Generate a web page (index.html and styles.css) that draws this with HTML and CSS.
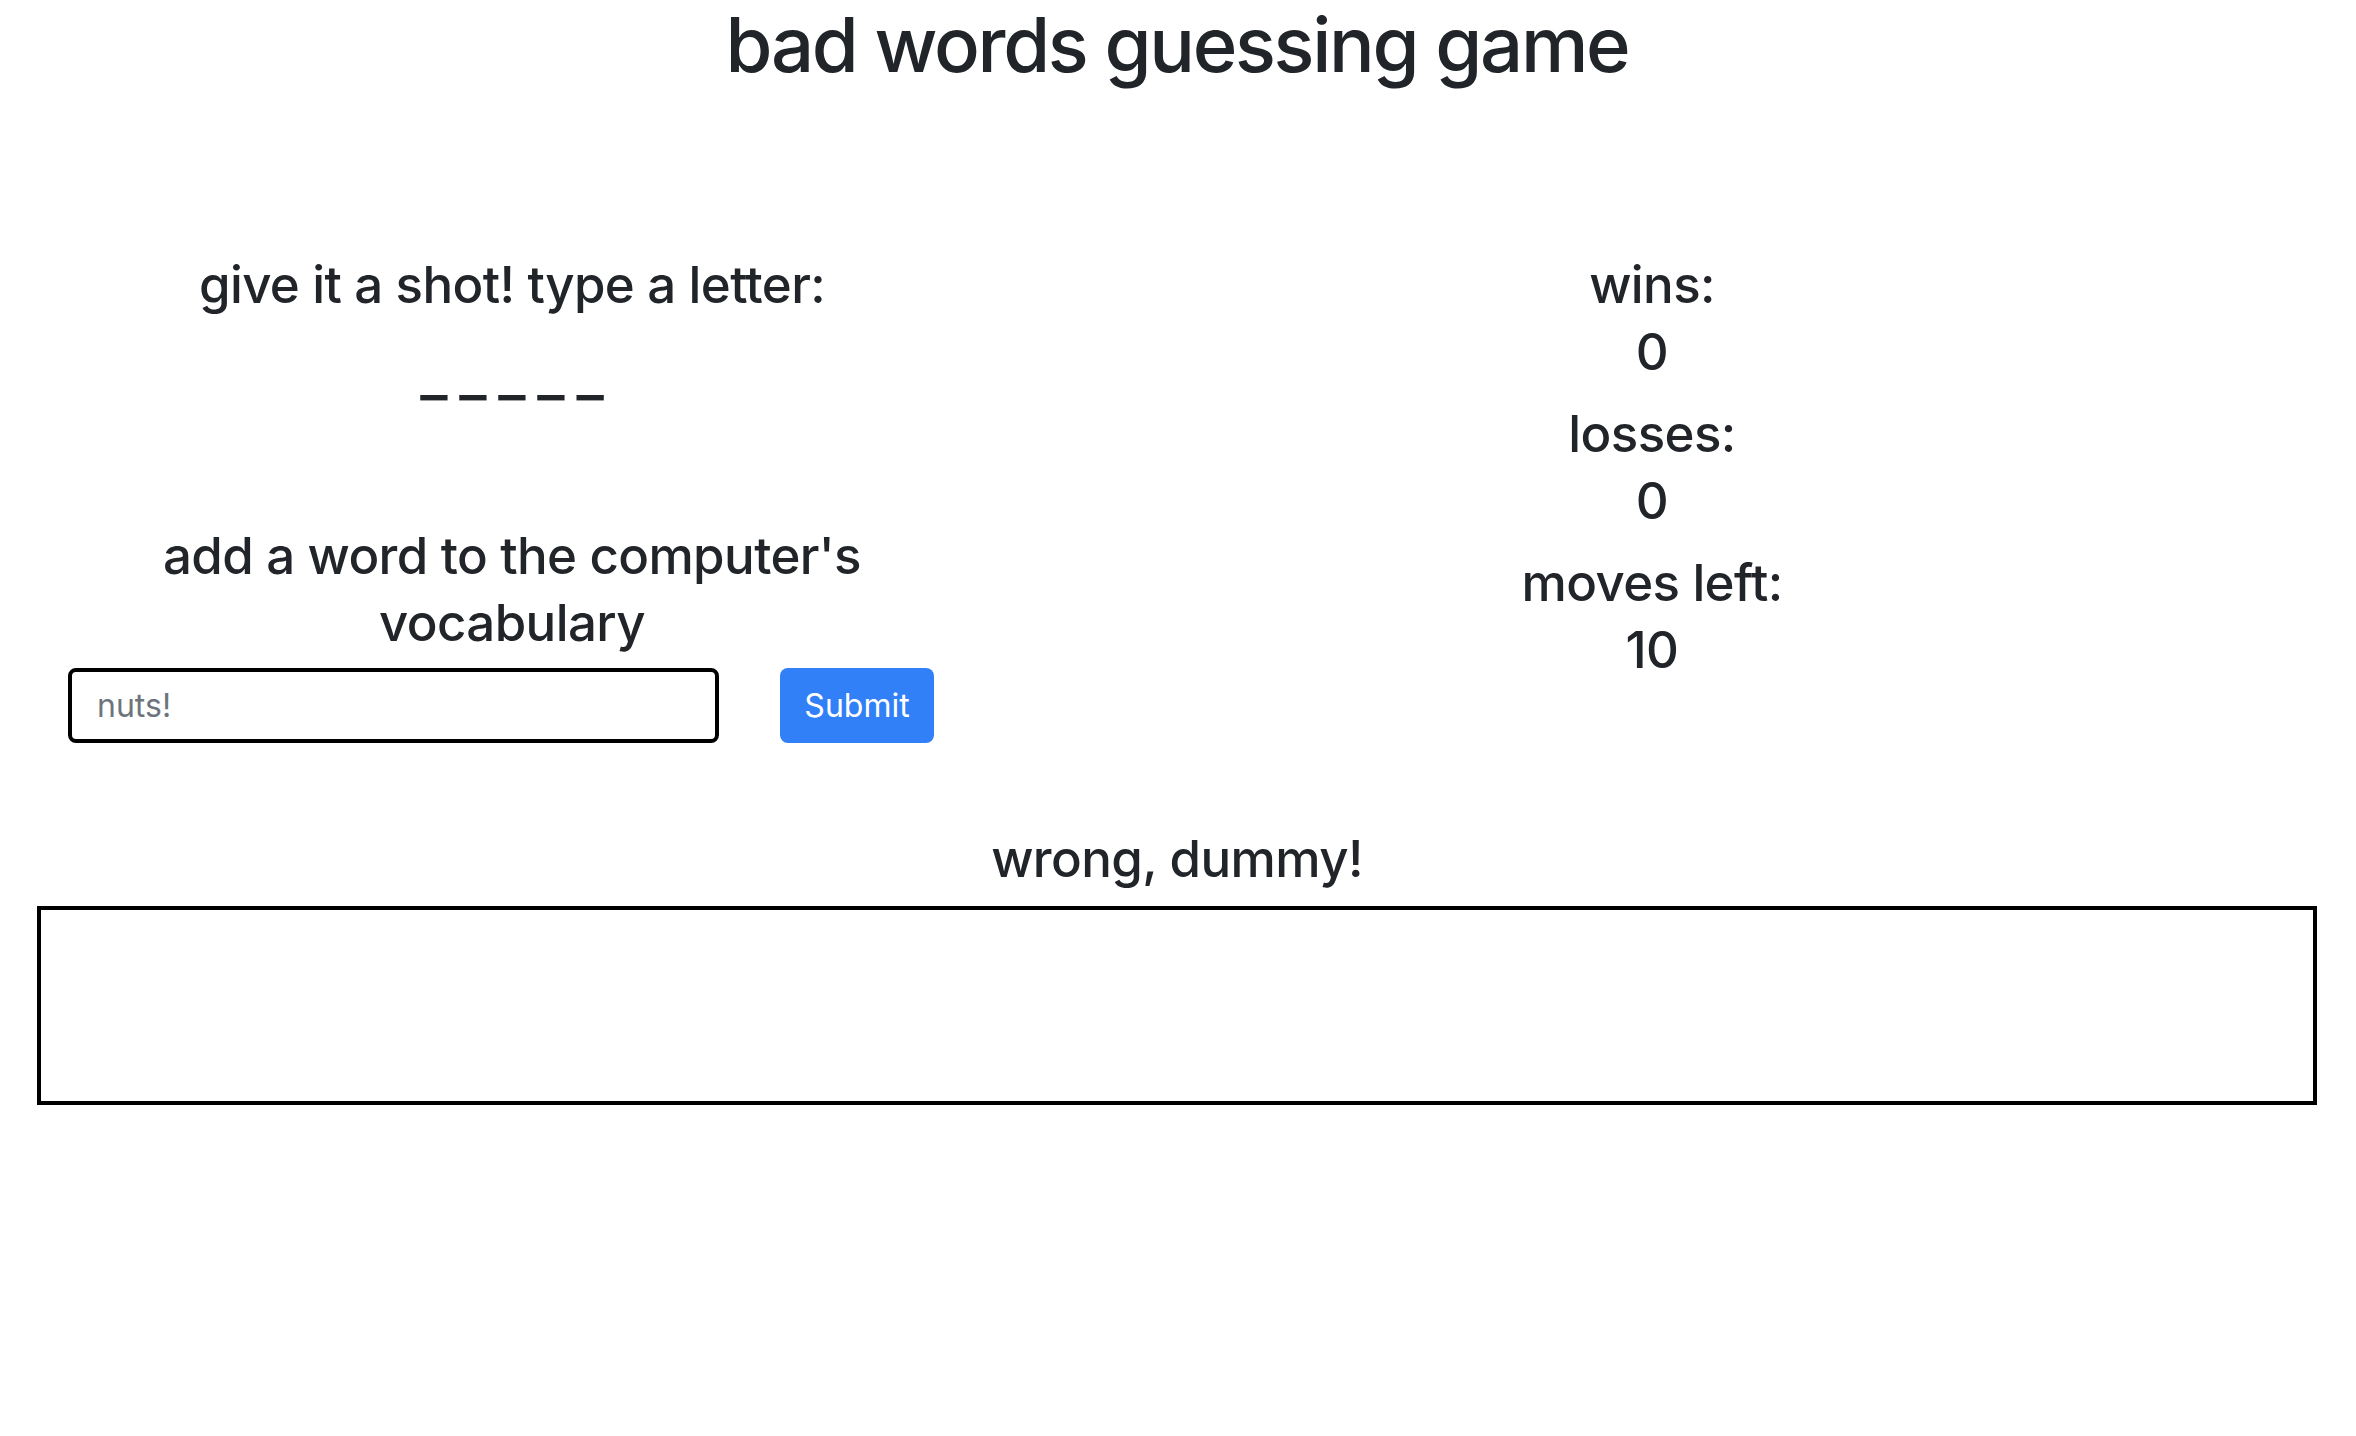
FILE: index.html
```html
<!DOCTYPE html>
<html lang="en">
<head>
<meta charset="utf-8">
<title>bad words guessing game</title>
<link rel="stylesheet" href="styles.css">
</head>
<body>
<div class="page">
  <h1 class="title">bad words guessing game</h1>
  <div class="columns">
    <div class="col-left">
      <h3 class="heading">give it a shot! type a letter:</h3>
      <h3 class="heading word">_ _ _ _ _</h3>
      <h3 class="heading add">add a word to the computer's vocabulary</h3>
      <form class="add-form" onsubmit="return false;">
        <input class="word-input" type="text" placeholder="nuts!">
        <button class="btn-submit" type="submit">Submit</button>
      </form>
    </div>
    <div class="col-right">
      <h3 class="heading stat">wins:<br>0</h3>
      <h3 class="heading stat">losses:<br>0</h3>
      <h3 class="heading stat">moves left:<br>10</h3>
    </div>
  </div>
  <h3 class="heading status">wrong, dummy!</h3>
  <div class="guess-box"></div>
</div>
</body>
</html>
```

FILE: styles.css
```css
html, body {
  margin: 0;
  padding: 0;
  background: #ffffff;
}

body {
  font-family: Inter, "Liberation Sans", sans-serif;
  color: #212529;
}

.page {
  padding: 0 39px 0 37px;
}

.title {
  margin: 0;
  font-size: 76px;
  font-weight: 500;
  line-height: 88px;
  letter-spacing: -2.3px;
  text-align: center;
}

.heading {
  margin: 0;
  font-size: 51px;
  font-weight: 500;
  line-height: 67px;
  letter-spacing: -0.6px;
  text-align: center;
}

.columns {
  display: grid;
  grid-template-columns: 950px 1330px;
  align-items: start;
  margin-top: 163px;
}

.word {
  margin-top: 22px;
  font-size: 59px;
  letter-spacing: 0;
  word-spacing: -4px;
}

.add {
  margin-top: 115px;
  padding: 0 60px;
}

.add-form {
  display: flex;
  align-items: center;
  gap: 61px;
  margin: 12px 0 0 31px;
}

.word-input {
  box-sizing: border-box;
  width: 651px;
  height: 75px;
  padding: 0 25px;
  border: 4px solid #000000;
  border-radius: 8px;
  font-family: Inter, "Liberation Sans", sans-serif;
  font-size: 32px;
  color: #495057;
  background: #ffffff;
  outline: none;
}

.word-input::placeholder {
  color: #6c757d;
}

.btn-submit {
  box-sizing: border-box;
  width: 154px;
  height: 75px;
  padding: 0;
  border: none;
  border-radius: 8px;
  background: #3180f7;
  color: #ffffff;
  font-family: Inter, "Liberation Sans", sans-serif;
  font-size: 32px;
  font-weight: 400;
}

.stat {
  margin-bottom: 15px;
}

.status {
  margin-top: 82px;
}

.guess-box {
  box-sizing: border-box;
  height: 199px;
  margin-top: 14px;
  border: 4px solid #000000;
}
```
